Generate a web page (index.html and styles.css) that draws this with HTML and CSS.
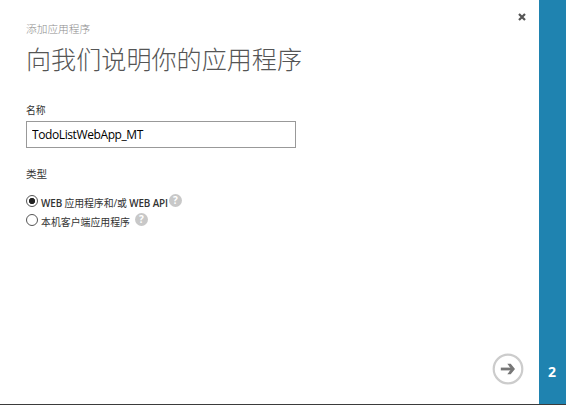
FILE: index.html
```html
<!DOCTYPE html>
<html lang="zh-CN">
<head>
<meta charset="utf-8">
<title>添加应用程序</title>
<link rel="stylesheet" href="styles.css">
</head>
<body>
<div class="dialog">
  <main class="content">
    <header class="header">
      <div class="subtitle">添加应用程序</div>
      <h1 class="title">向我们说明你的应用程序</h1>
    </header>
    <form class="form">
      <label class="label" for="name">名称</label>
      <input class="input" id="name" type="text" value="TodoListWebApp_MT">
      <div class="label label-type">类型</div>
      <div class="option">
        <span class="radio checked"></span>
        <span class="option-text web">WEB <span class="cjk">应用程序和/或</span> WEB API</span>
        <span class="help">?</span>
      </div>
      <div class="option">
        <span class="radio"></span>
        <span class="option-text native">本机客户端应用程序</span>
        <span class="help">?</span>
      </div>
    </form>
  </main>
  <div class="actions">
    <svg class="close" viewBox="0 0 8 8"><path d="M1 1L7 7M7 1L1 7"/></svg>
    <svg class="next" viewBox="0 0 32 32"><circle cx="16" cy="16" r="14.3"/><path class="shaft" d="M8.8 16H21"/><path class="head" d="M15.3 10.8H18.7L23 16L18.7 21.2H15.3L19.3 16Z"/></svg>
  </div>
  <aside class="steps"><span class="step">2</span></aside>
</div>
</body>
</html>
```

FILE: styles.css
```css
* { box-sizing: border-box; }
body {
  margin: 0;
  background: #fff;
  color: #333;
  font-family: "Open Sans", "Noto Sans CJK SC", sans-serif;
}
.dialog {
  display: flex;
  height: 405px;
  border-bottom: 1px solid #3b3b3b;
}
.content { flex: 1; padding: 22px 0 0 26px; }
.subtitle {
  font-size: 10.7px;
  line-height: 14px;
  color: #8c8c8c;
  font-weight: 300;
}
.title {
  margin: 4px 0 0;
  font-size: 25.1px;
  line-height: 38px;
  font-weight: 300;
  color: #555;
  white-space: nowrap;
}
.form { margin-top: 26px; }
.label {
  display: block;
  font-size: 9.8px;
  line-height: 14px;
}
.input {
  display: block;
  width: 270px;
  height: 27px;
  margin-top: 3px;
  padding: 0 5px;
  border: 1px solid #999;
  background: #fff;
  color: #000;
  font: 12px "Open Sans", sans-serif;
  letter-spacing: -0.4px;
  outline: none;
}
.label-type { margin: 19px 0 10px; font-size: 10.6px; }
.option {
  display: flex;
  align-items: center;
  height: 19px;
}
.radio {
  width: 12px;
  height: 12px;
  margin-right: 3px;
  border: 1px solid #555;
  border-radius: 50%;
}
.radio.checked { background: radial-gradient(circle, #222 0 2.8px, #fff 3.4px); }
.option-text {
  font-size: 9.9px;
  line-height: 16px;
  padding-top: 4px;
  white-space: nowrap;
}
.web { width: 128px; font-weight: 600; letter-spacing: -0.1px; }
.cjk { font-weight: 400; }
.native { margin-right: 5px; }
.help {
  width: 13px;
  height: 13px;
  border-radius: 50%;
  background: #c8c8c8;
  color: #fff;
  font-size: 10px;
  line-height: 13px;
  font-weight: 700;
  text-align: center;
}
.actions {
  display: flex;
  flex-direction: column;
  justify-content: space-between;
  align-items: center;
  width: 46px;
  padding: 13px 16px 19px 0;
}
.close {
  width: 8px;
  height: 8px;
  margin-left: 27px;
  fill: none;
  stroke: #555;
  stroke-width: 2.2;
}
.next { width: 32px; height: 32px; flex: none; }
.next circle { fill: none; stroke: #ccc; stroke-width: 2.2; }
.shaft { stroke: #777; stroke-width: 2.8; }
.head { fill: #777; }
.steps {
  display: flex;
  align-items: flex-end;
  justify-content: center;
  width: 27px;
  padding: 0 1px 22px 0;
  background: #1f83b0;
  color: #fff;
}
.step { font-size: 14px; line-height: 20px; font-weight: 700; }
```
